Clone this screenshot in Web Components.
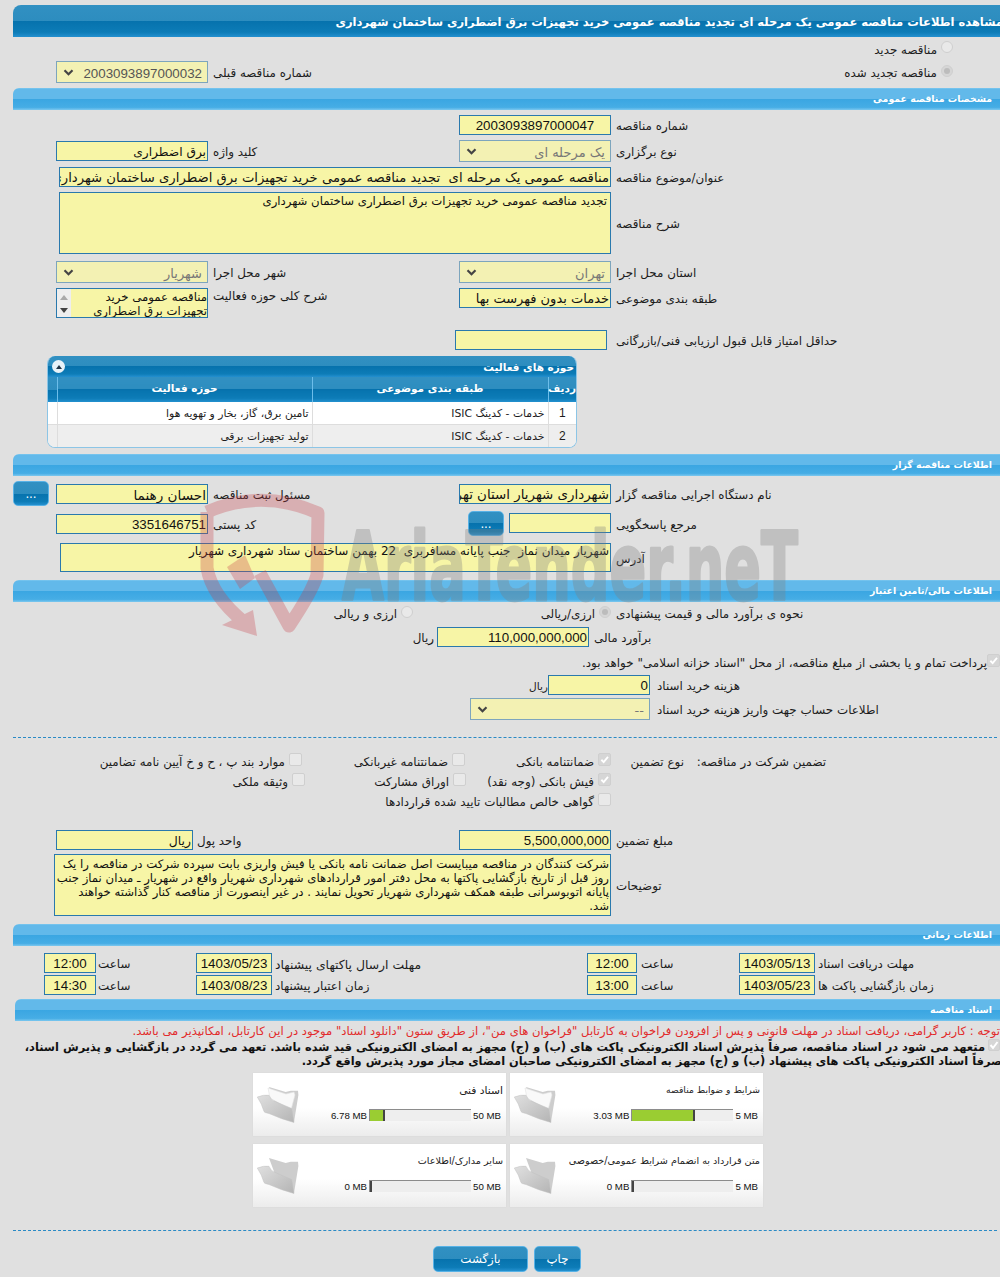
<!DOCTYPE html>
<html lang="fa">
<head>
<meta charset="utf-8">
<title>مشاهده اطلاعات مناقصه</title>
<style>
  html, body { margin: 0; background: #e0e0e0; }
  body {
    width: 1000px;
    height: 1277px;
    overflow: hidden;
    position: relative;
    font: 11.9px "DejaVu Sans", sans-serif;
    color: #1c1c1c;
  }
</style>
</head>
<body>
<tender-bar kind="title" style="margin:5px 0 0 13px">مشاهده اطلاعات مناقصه عمومی یک مرحله ای تجدید مناقصه عمومی خرید تجهیزات برق اضطراری ساختمان شهرداری</tender-bar>

<form-row style="height:23px">
  <f-choice type="radio" style="margin-right:47px">مناقصه جدید</f-choice>
</form-row>
<form-row style="height:24px">
  <f-choice type="radio" checked style="margin-right:47px;width:157px">مناقصه تجدید شده</f-choice>
  <f-label style="width:588px">شماره مناقصه قبلی</f-label>
  <f-select num style="width:152px;height:22px">2003093897000032</f-select>
</form-row>

<tender-bar style="margin:4px 0 0 13px">مشخصات مناقصه عمومی</tender-bar>

<form-row style="height:20px;margin-top:5px">
  <f-label style="width:389px">شماره مناقصه</f-label>
  <f-input num center style="width:152px">2003093897000047</f-input>
</form-row>
<form-row style="height:22px;margin-top:5px">
  <f-label style="width:389px">نوع برگزاری</f-label>
  <f-select style="width:152px">یک مرحله ای</f-select>
  <f-label style="width:251px">کلید واژه</f-label>
  <f-input style="width:152px;height:20px;font-size:12.2px">برق اضطراری</f-input>
</form-row>
<form-row style="height:20px;margin-top:5px">
  <f-label style="width:389px">عنوان/موضوع مناقصه</f-label>
  <f-input style="width:552px;font-size:13.2px">مناقصه عمومی یک مرحله ای &nbsp;تجدید مناقصه عمومی خرید تجهیزات برق اضطراری ساختمان شهرداری</f-input>
</form-row>
<form-row style="height:62px;margin-top:5px">
  <f-label style="width:389px">شرح مناقصه</f-label>
  <f-input area style="width:552px;padding-right:3px;padding-top:1px">تجدید مناقصه عمومی خرید تجهیزات برق اضطراری ساختمان شهرداری</f-input>
</form-row>
<form-row style="height:22px;margin-top:7px">
  <f-label style="width:389px">استان محل اجرا</f-label>
  <f-select style="width:152px">تهران</f-select>
  <f-label style="width:251px">شهر محل اجرا</f-label>
  <f-select style="width:152px">شهریار</f-select>
</form-row>
<form-row style="height:30px;margin-top:5px;align-items:flex-start">
  <f-label style="width:389px;line-height:20px;padding-top:1px">طبقه بندی موضوعی</f-label>
  <f-input style="width:152px;height:20px">خدمات بدون فهرست بها</f-input>
  <f-label style="width:251px;line-height:15px;padding-top:1px">شرح کلی حوزه فعالیت</f-label>
  <f-listbox style="width:152px">مناقصه عمومی خرید<br>تجهیزات برق اضطراری</f-listbox>
</form-row>
<form-row style="height:20px;margin-top:12px">
  <f-label style="width:393px;padding-left:9px">حداقل امتیاز قابل قبول ارزیابی فنی/بازرگانی</f-label>
  <f-input style="width:152px"></f-input>
</form-row>

<activity-table style="margin:6px 0 0 47px"></activity-table>

<tender-bar style="margin:6px 0 0 13px">اطلاعات مناقصه گزار</tender-bar>

<form-row style="height:25px;margin-top:5px">
  <f-label style="width:389px">نام دستگاه اجرایی مناقصه گزار</f-label>
  <f-input style="width:152px;height:20px;font-size:13.4px">شهرداری شهریار استان تهران</f-input>
  <f-label style="width:251px">مسئول ثبت مناقصه</f-label>
  <f-input style="width:152px;height:20px;font-size:13.6px">احسان رهنما</f-input>
  <ref-button style="margin-right:7px;width:36px">...</ref-button>
</form-row>
<form-row style="height:25px;margin-top:5px">
  <f-label style="width:389px">مرجع پاسخگویی</f-label>
  <f-input style="width:102px;height:20px;margin-bottom:2px"></f-input>
  <ref-button style="margin-right:5px;width:36px">...</ref-button>
  <f-label style="width:260px">کد پستی</f-label>
  <f-input num style="width:152px;height:20px">3351646751</f-input>
</form-row>
<form-row style="height:29px;margin-top:7px">
  <f-label style="width:389px">آدرس</f-label>
  <f-input area style="width:551px;font-size:12px;padding-top:0">شهریار میدان نماز &nbsp;جنب پایانه مسافربری &nbsp;22 بهمن ساختمان ستاد شهرداری شهریار</f-input>
</form-row>

<tender-bar style="margin:8px 0 0 13px">اطلاعات مالی/تامین اعتبار</tender-bar>

<form-row style="height:20px;margin-top:1px">
  <f-label style="width:389px">نحوه ی برآورد مالی و قیمت پیشنهادی</f-label>
  <f-choice type="radio" checked style="width:198px">ارزی/ریالی</f-choice>
  <f-choice type="radio">ارزی و ریالی</f-choice>
</form-row>
<form-row style="height:20px;margin-top:4px">
  <f-label style="width:411px">برآورد مالی</f-label>
  <f-input num style="width:152px">110,000,000,000</f-input>
  <f-label start style="margin-right:3px">ریال</f-label>
</form-row>
<form-row style="height:20px;margin-top:5px">
  <f-choice type="check" checked style="gap:0">پرداخت تمام و یا بخشی از مبلغ مناقصه، از محل "اسناد خزانه اسلامی" خواهد بود.</f-choice>
</form-row>
<form-row style="height:20px;margin-top:3px">
  <f-label style="width:350px;padding-left:7px">هزینه خرید اسناد</f-label>
  <f-input num style="width:102px">0</f-input>
  <f-label start style="font-size:10.6px">ریال</f-label>
</form-row>
<form-row style="height:22px;margin-top:3px">
  <f-label style="width:350px;padding-left:7px">اطلاعات حساب جهت واریز هزینه خرید اسناد</f-label>
  <f-select style="width:180px">--</f-select>
</form-row>

<dashed-line style="margin-top:17px"></dashed-line>

<form-row style="height:20px;margin-top:13px">
  <f-label start style="width:142px;margin-right:174px">تضمین شرکت در مناقصه:</f-label>
  <f-label start style="width:73px">نوع تضمین</f-label>
  <f-choice type="check" checked style="width:146px">ضمانتنامه بانکی</f-choice>
  <f-choice type="check" style="width:163px">ضمانتنامه غیربانکی</f-choice>
  <f-choice type="check">موارد بند پ ، ح و خ آیین نامه تضامین</f-choice>
</form-row>
<form-row style="height:20px">
  <f-choice type="check" checked style="width:145px;margin-right:389px">فیش بانکی (وجه نقد)</f-choice>
  <f-choice type="check" style="width:161px">اوراق مشارکت</f-choice>
  <f-choice type="check">وثیقه ملکی</f-choice>
</form-row>
<form-row style="height:20px">
  <f-choice type="check" style="margin-right:389px">گواهی خالص مطالبات تایید شده قراردادها</f-choice>
</form-row>
<form-row style="height:20px;margin-top:19px">
  <f-label style="width:389px">مبلغ تضمین</f-label>
  <f-input num style="width:152px">5,500,000,000</f-input>
  <f-label style="width:266px;padding-left:4px">واحد پول</f-label>
  <f-input style="width:137px;font-size:12.4px">ریال</f-input>
</form-row>
<form-row style="height:62px;margin-top:4px">
  <f-label style="width:389px">توضیحات</f-label>
  <f-input area style="width:557px;padding-top:2px">شرکت کنندگان در مناقصه میبایست اصل ضمانت نامه بانکی یا فیش واریزی بابت سپرده شرکت در مناقصه را یک<br>روز قبل از تاریخ بازگشایی پاکتها به محل دفتر امور قراردادهای شهرداری شهریار واقع در شهریار ـ میدان نماز جنب<br>پایانه اتوبوسرانی طبقه همکف شهرداری شهریار تحویل نمایند . در غیر اینصورت از مناقصه کنار گذاشته خواهند<br>شد.</f-input>
</form-row>

<tender-bar style="margin:8px 0 0 13px">اطلاعات زمانی</tender-bar>

<form-row style="height:20px;margin-top:7px">
  <f-label style="width:185px;padding-left:3px">مهلت دریافت اسناد</f-label>
  <f-input num center style="width:76px">1403/05/13</f-input>
  <f-label style="width:102px;padding-left:4px">ساعت</f-label>
  <f-input num center style="width:50px">12:00</f-input>
  <f-label style="width:315px;padding-left:3px;font-size:12.4px">مهلت ارسال پاکتهای پیشنهاد</f-label>
  <f-input num center style="width:76px">1403/05/23</f-input>
  <f-label style="width:100px;padding-left:2px">ساعت</f-label>
  <f-input num center style="width:52px">12:00</f-input>
</form-row>
<form-row style="height:20px;margin-top:2px">
  <f-label style="width:185px;padding-left:3px">زمان بازگشایی پاکت ها</f-label>
  <f-input num center style="width:76px">1403/05/23</f-input>
  <f-label style="width:102px;padding-left:4px">ساعت</f-label>
  <f-input num center style="width:50px">13:00</f-input>
  <f-label style="width:315px;padding-left:3px">زمان اعتبار پیشنهاد</f-label>
  <f-input num center style="width:76px">1403/08/23</f-input>
  <f-label style="width:100px;padding-left:2px">ساعت</f-label>
  <f-input num center style="width:52px">14:30</f-input>
</form-row>

<tender-bar style="margin:4px 0 0 15px">اسناد مناقصه</tender-bar>

<doc-notes></doc-notes>

<card-grid style="margin:5px 0 0 253px">
  <doc-card title-text="شرایط و ضوابط مناقصه" used="3.03 MB" max="5 MB" percent="62" fs="9.2"></doc-card>
  <doc-card title-text="اسناد فنی" used="6.78 MB" max="50 MB" percent="15" fs="10.7"></doc-card>
  <doc-card title-text="متن قرارداد به انضمام شرایط عمومی/خصوصی" used="0 MB" max="5 MB" percent="0" fs="9.65" empty></doc-card>
  <doc-card title-text="سایر مدارک/اطلاعات" used="0 MB" max="50 MB" percent="0" fs="9.65" empty></doc-card>
</card-grid>

<dashed-line style="margin-top:23px"></dashed-line>

<form-row style="height:26px;margin-top:15px">
  <ref-button style="margin-right:419px;width:47px;height:26px">چاپ</ref-button>
  <ref-button style="margin-right:6px;width:95px;height:26px">بازگشت</ref-button>
</form-row>

<tender-watermark></tender-watermark>

<script>
const BOX = `box-sizing:border-box;border:1px solid #2a79ad;background:#f7f5a6;color:#111;`;
const SHINE = `linear-gradient(#3190c2 0,#2d8dbf 50%,#0672ad 50%,#0d7cb7 85%,#2490cf 100%)`;

class ShadowBase extends HTMLElement {
  constructor() {
    super();
    this.attachShadow({ mode: 'open' });
  }
  connectedCallback() {
    this.shadowRoot.innerHTML = this.render();
  }
}

class TenderBar extends ShadowBase {
  render() {
    return `<style>
      :host { display:block; height:22px; overflow:hidden; direction:rtl; border-radius:6px 0 0 0;
        background:linear-gradient(#7fc9ef 0,#62b9ea 6%,#62b9ea 50%,#3aa6e2 50%,#46ade5 88%,#7cc8ef 100%);
        color:#fff; font-weight:bold; font-size:9.4px; line-height:21px; white-space:nowrap; padding-right:8px; }
      :host([kind=title]) { height:32px; line-height:34px; font-size:11.5px; padding-right:0; border-radius:8px 0 0 0;
        background:${SHINE}; }
      :host([kind=title]) span { margin-right:-3px; }
      span { display:inline-block; }
    </style><span><slot></slot></span>`;
  }
}

class FormRow extends ShadowBase {
  render() {
    return `<style>
      :host { display:flex; direction:rtl; align-items:center; width:1000px; }
    </style><slot></slot>`;
  }
}

class FLabel extends ShadowBase {
  render() {
    return `<style>
      :host { display:block; flex:none; box-sizing:border-box; text-align:left; padding:2px 0 0 5px; white-space:nowrap; }
      :host([start]) { text-align:right; padding-left:0; }
    </style><slot></slot>`;
  }
}

class FInput extends ShadowBase {
  render() {
    return `<style>
      :host { display:block; flex:none; ${BOX} height:100%; padding:1px 1px 0; overflow:hidden; white-space:nowrap;
        font-size:13px; line-height:18px; }
      :host([num]) { font:13.33px/18px "Liberation Sans", sans-serif; }
      :host([center]) { text-align:center; }
      :host([area]) { font-size:11.7px; line-height:14px; padding-top:2px; }
    </style><slot></slot>`;
  }
}

class FSelect extends ShadowBase {
  render() {
    return `<style>
      :host { display:flex; flex:none; box-sizing:border-box; height:100%; border:1px solid #7da5bd; background:#f3f1b3;
        color:#777; align-items:center; justify-content:space-between; padding:0 5px 0 6px; font-size:13px; white-space:nowrap; }
      :host([num]) { font:13.33px "Liberation Sans", sans-serif; color:#555; }
      .t { padding-top:2px; }
      svg { width:11px; height:7px; flex:none; }
    </style><span class="t"><slot></slot></span>
    <svg viewBox="0 0 11 7"><path d="M1.5 1.3 5.5 5.2 9.5 1.3" fill="none" stroke="#444" stroke-width="2.2"/></svg>`;
  }
}

class FListbox extends ShadowBase {
  render() {
    return `<style>
      :host { display:flex; flex:none; ${BOX} height:30px; overflow:hidden; font-size:11.7px; line-height:14px; white-space:nowrap; }
      .txt { flex:1; padding-top:1px; }
      .bar { width:14px; background:#eee; display:flex; flex-direction:column; justify-content:space-between; align-items:center; padding:6px 0 4px; box-sizing:border-box; }
      .bar i { width:0; height:0; border:4px solid transparent; border-top:0; border-bottom:5px solid #aaa; }
      .bar i + i { border-bottom:0; border-top:5px solid #444; }
    </style><div class="txt"><slot></slot></div><div class="bar"><i></i><i></i></div>`;
  }
}

class FChoice extends ShadowBase {
  render() {
    const checked = this.hasAttribute('checked');
    const isRadio = this.getAttribute('type') === 'radio';
    const mark = isRadio
      ? (checked ? '<b></b>' : '')
      : (checked ? '<svg viewBox="0 0 13 13"><path d="M2.8 6.8 5.5 9.6 10.6 3.4" fill="none" stroke="#fff" stroke-width="2.2"/></svg>' : '');
    return `<style>
      :host { display:flex; flex:none; align-items:center; gap:4px; white-space:nowrap; box-sizing:border-box; }
      .m { width:13px; height:13px; flex:none; box-sizing:border-box; border:1px solid #cfcfcf; border-radius:2px; background:#e9e9e9;
        display:flex; align-items:center; justify-content:center; margin-top:-4px; }
      .m.on { background:#d6d6d6; }
      .m.r { width:12px; height:12px; margin-top:-3px; border-radius:50%; }
      .m b { width:6px; height:6px; border-radius:50%; background:#bcbcbc; }
      .t { padding-top:2px; }
      svg { width:13px; height:13px; }
    </style><span class="m ${isRadio ? 'r' : ''} ${checked ? 'on' : ''}">${mark}</span><span class="t"><slot></slot></span>`;
  }
}

class RefButton extends ShadowBase {
  render() {
    return `<style>
      :host { display:flex; flex:none; box-sizing:border-box; height:25px; align-items:center; justify-content:center;
        border:1px solid #58b2e6; border-radius:5px; background:${SHINE}; color:#fff; font-size:11.8px; white-space:nowrap; }
    </style><slot></slot>`;
  }
}

class DashedLine extends ShadowBase {
  render() {
    return `<style>
      :host { display:block; margin-left:13px; width:984px; border-top:1px dashed #2a8ac5; height:0; }
    </style>`;
  }
}

class ActivityTable extends ShadowBase {
  render() {
    const rows = [
      ['1', 'خدمات - کدینگ ISIC', 'تامین برق، گاز، بخار و تهویه هوا'],
      ['2', 'خدمات - کدینگ ISIC', 'تولید تجهیزات برقی']
    ];
    return `<style>
      :host { display:block; width:530px; direction:rtl; border:1px solid #8cc5e6; border-top:0; box-sizing:border-box;
        border-radius:8px; overflow:hidden; background:#fff; font-size:10.8px; }
      .head { height:21px; background:${SHINE}; color:#fff; font-weight:bold; font-size:10.5px; display:flex; align-items:center;
        justify-content:space-between; padding:0 2px 0 4px; }
      .toggle { width:13px; height:13px; border-radius:50%; background:#e8f2f8; display:flex; align-items:center; justify-content:center; }
      .toggle i { width:0; height:0; border:3.5px solid transparent; border-top:0; border-bottom:4px solid #234; }
      table { width:100%; border-collapse:collapse; table-layout:fixed; }
      th { height:22px; padding:0 0 3px; background:${SHINE}; color:#fff; font-weight:bold; font-size:10.5px; border-left:1px solid #6cbdea; }
      td { height:22px; padding:0 3px; border-left:1px solid #ddd; text-align:right; }
      tr + tr td { border-top:1px solid #ddd; }
      tbody tr:nth-child(2) td { background:#eee; }
      td.n { text-align:center; font:12px "Liberation Sans", sans-serif; }
      th:last-child, td:last-child { border-left:0; }
    </style>
    <div class="head"><span>حوزه های فعالیت</span><span class="toggle"><i></i></span></div>
    <table><colgroup><col style="width:28px"><col style="width:236px"><col style="width:255px"><col></colgroup>
      <thead><tr><th>ردیف</th><th>طبقه بندی موضوعی</th><th>حوزه فعالیت</th><th></th></tr></thead>
      <tbody>${rows.map(r => `<tr><td class="n">${r[0]}</td><td>${r[1]}</td><td>${r[2]}</td><td></td></tr>`).join('')}</tbody>
    </table>`;
  }
}

class DocNotes extends ShadowBase {
  render() {
    return `<style>
      :host { display:block; direction:rtl; width:1000px; white-space:nowrap; overflow:hidden; }
      .red { height:19px; line-height:20px; color:#e22b2b; font-size:11.6px; }
      .bold { font-weight:bold; font-size:11.4px; line-height:14px; color:#111; }
      .first { display:flex; align-items:center; gap:3px; height:14px; }
      .chk { width:12px; height:12px; flex:none; background:#d6d6d6; border:1px solid #cfcfcf; box-sizing:border-box; border-radius:2px; margin-top:-4px; }
      .chk svg { display:block; width:10px; height:10px; }
      .second { margin-right:-2px; }
    </style>
    <div class="red">توجه : کاربر گرامی، دریافت اسناد در مهلت قانونی و پس از افزودن فراخوان به کارتابل "فراخوان های من"، از طریق ستون "دانلود اسناد" موجود در این کارتابل، امکانپذیر می باشد.</div>
    <div class="bold first"><span class="chk"><svg viewBox="0 0 10 10"><path d="M1.5 5 4 8 8.5 2" fill="none" stroke="#fff" stroke-width="2"/></svg></span><span>متعهد می شود در اسناد مناقصه، صرفاً پذیرش اسناد الکترونیکی پاکت های (ب) و (ج) مجهز به امضای الکترونیکی قید شده باشد. تعهد می گردد در بازگشایی و پذیرش اسناد،</span></div>
    <div class="bold second">صرفاً اسناد الکترونیکی پاکت های پیشنهاد (ب) و (ج) مجهز به امضای الکترونیکی صاحبان امضای مجاز مورد پذیرش واقع گردد.</div>`;
  }
}

class CardGrid extends ShadowBase {
  render() {
    return `<style>
      :host { display:grid; direction:rtl; grid-template-columns:253px 253px; column-gap:4px; row-gap:8px; width:510px; }
    </style><slot></slot>`;
  }
}

class DocCard extends ShadowBase {
  render() {
    const pct = this.getAttribute('percent');
    const empty = this.hasAttribute('empty');
    const paper = empty ? '' : '<path d="M12 2 30 8 38 6 39 9 35 24 14 12Z" fill="#f9f9f9" stroke="#e2e2e2" stroke-width=".6"/>';
    return `<style>
      :host { display:flex; height:63px; direction:rtl; box-sizing:border-box; background:linear-gradient(#fff 55%,#ececec 100%);
        box-shadow:0 0 1px #ccc; }
      .body { flex:1; padding:11px 3px 0 0; min-width:0; }
      .title { height:25px; font-size:${this.getAttribute('fs')}px; color:#222; white-space:nowrap; }
      .prog { display:flex; align-items:center; font:9.7px "Liberation Sans", sans-serif; color:#111; }
      .max { padding:0 2px; direction:ltr; }
      .bar { width:102px; height:12px; box-sizing:border-box; background:#eee; border-top:1px solid #8c8c8c; border-left:1px solid #8c8c8c;
        direction:ltr; display:flex; }
      .fill { background:#9acd32; border-right:2px solid #444; height:11px; box-sizing:border-box; }
      .used { padding-right:2px; direction:ltr; }
      svg { width:43px; height:38px; margin:13px 0 0 3px; flex:none; align-self:flex-start; }
    </style>
    <div class="body">
      <div class="title">${this.getAttribute('title-text')}</div>
      <div class="prog">
        <span class="max">${this.getAttribute('max')}</span>
        <div class="bar"><div class="fill" style="width:${pct === '0' ? '2px' : pct + '%'}"></div></div>
        <span class="used">${this.getAttribute('used')}</span>
      </div>
    </div>
    <svg viewBox="0 0 43 38">
      <defs><linearGradient id="g" x1="0" y1="0" x2="1" y2="1"><stop offset="0" stop-color="#e0e0e0"/><stop offset="1" stop-color="#b4b4b4"/></linearGradient></defs>
      <path d="M13 1 29.7 6 34.7 4.7 42 4.7 42.4 9 38 36 20 20Z" fill="#cdcdcd"/>
      ${paper}
      <path d="M1.3 11Q8 8.5 13 9.3 15 14 18 15L35.7 22.5 38 36.5Q25 33 13 27.5 8 26.5 8 25.5 6 18 1.3 11Z" fill="url(#g)" stroke="#c0c0c0" stroke-width=".5"/>
    </svg>`;
  }
}

class TenderWatermark extends ShadowBase {
  render() {
    return `<style>
      :host { position:absolute; left:0; top:0; width:1000px; height:1277px; pointer-events:none; }
      svg { width:1000px; height:1277px; display:block; }
      text { font:bold 94px "DejaVu Sans", sans-serif; }
    </style>
    <svg viewBox="0 0 1000 1277">
      <g opacity=".3">
        <g fill="none" stroke="#c8404a" stroke-width="13" stroke-linejoin="round">
          <path d="M207 512Q262 488 318 513L317 575Q312 592 289 626L260 573"/>
          <path d="M207 512V568Q212 596 244 622"/>
        </g>
        <path d="M222 625 257 636 253 610Z" fill="#c8404a"/>
        <path d="M227 567 245 555 255 578 240 589Z" fill="#c8404a"/>
      </g>
      <g opacity=".33">
        <text x="342" y="600" textLength="456" lengthAdjust="spacingAndGlyphs" fill="#808080" stroke="#808080" stroke-width="3" stroke-linejoin="round">AriaTender.neT</text>
      </g>
    </svg>`;
  }
}

customElements.define('tender-bar', TenderBar);
customElements.define('form-row', FormRow);
customElements.define('f-label', FLabel);
customElements.define('f-input', FInput);
customElements.define('f-select', FSelect);
customElements.define('f-listbox', FListbox);
customElements.define('f-choice', FChoice);
customElements.define('ref-button', RefButton);
customElements.define('dashed-line', DashedLine);
customElements.define('activity-table', ActivityTable);
customElements.define('doc-notes', DocNotes);
customElements.define('card-grid', CardGrid);
customElements.define('doc-card', DocCard);
customElements.define('tender-watermark', TenderWatermark);
</script>
</body>
</html>
